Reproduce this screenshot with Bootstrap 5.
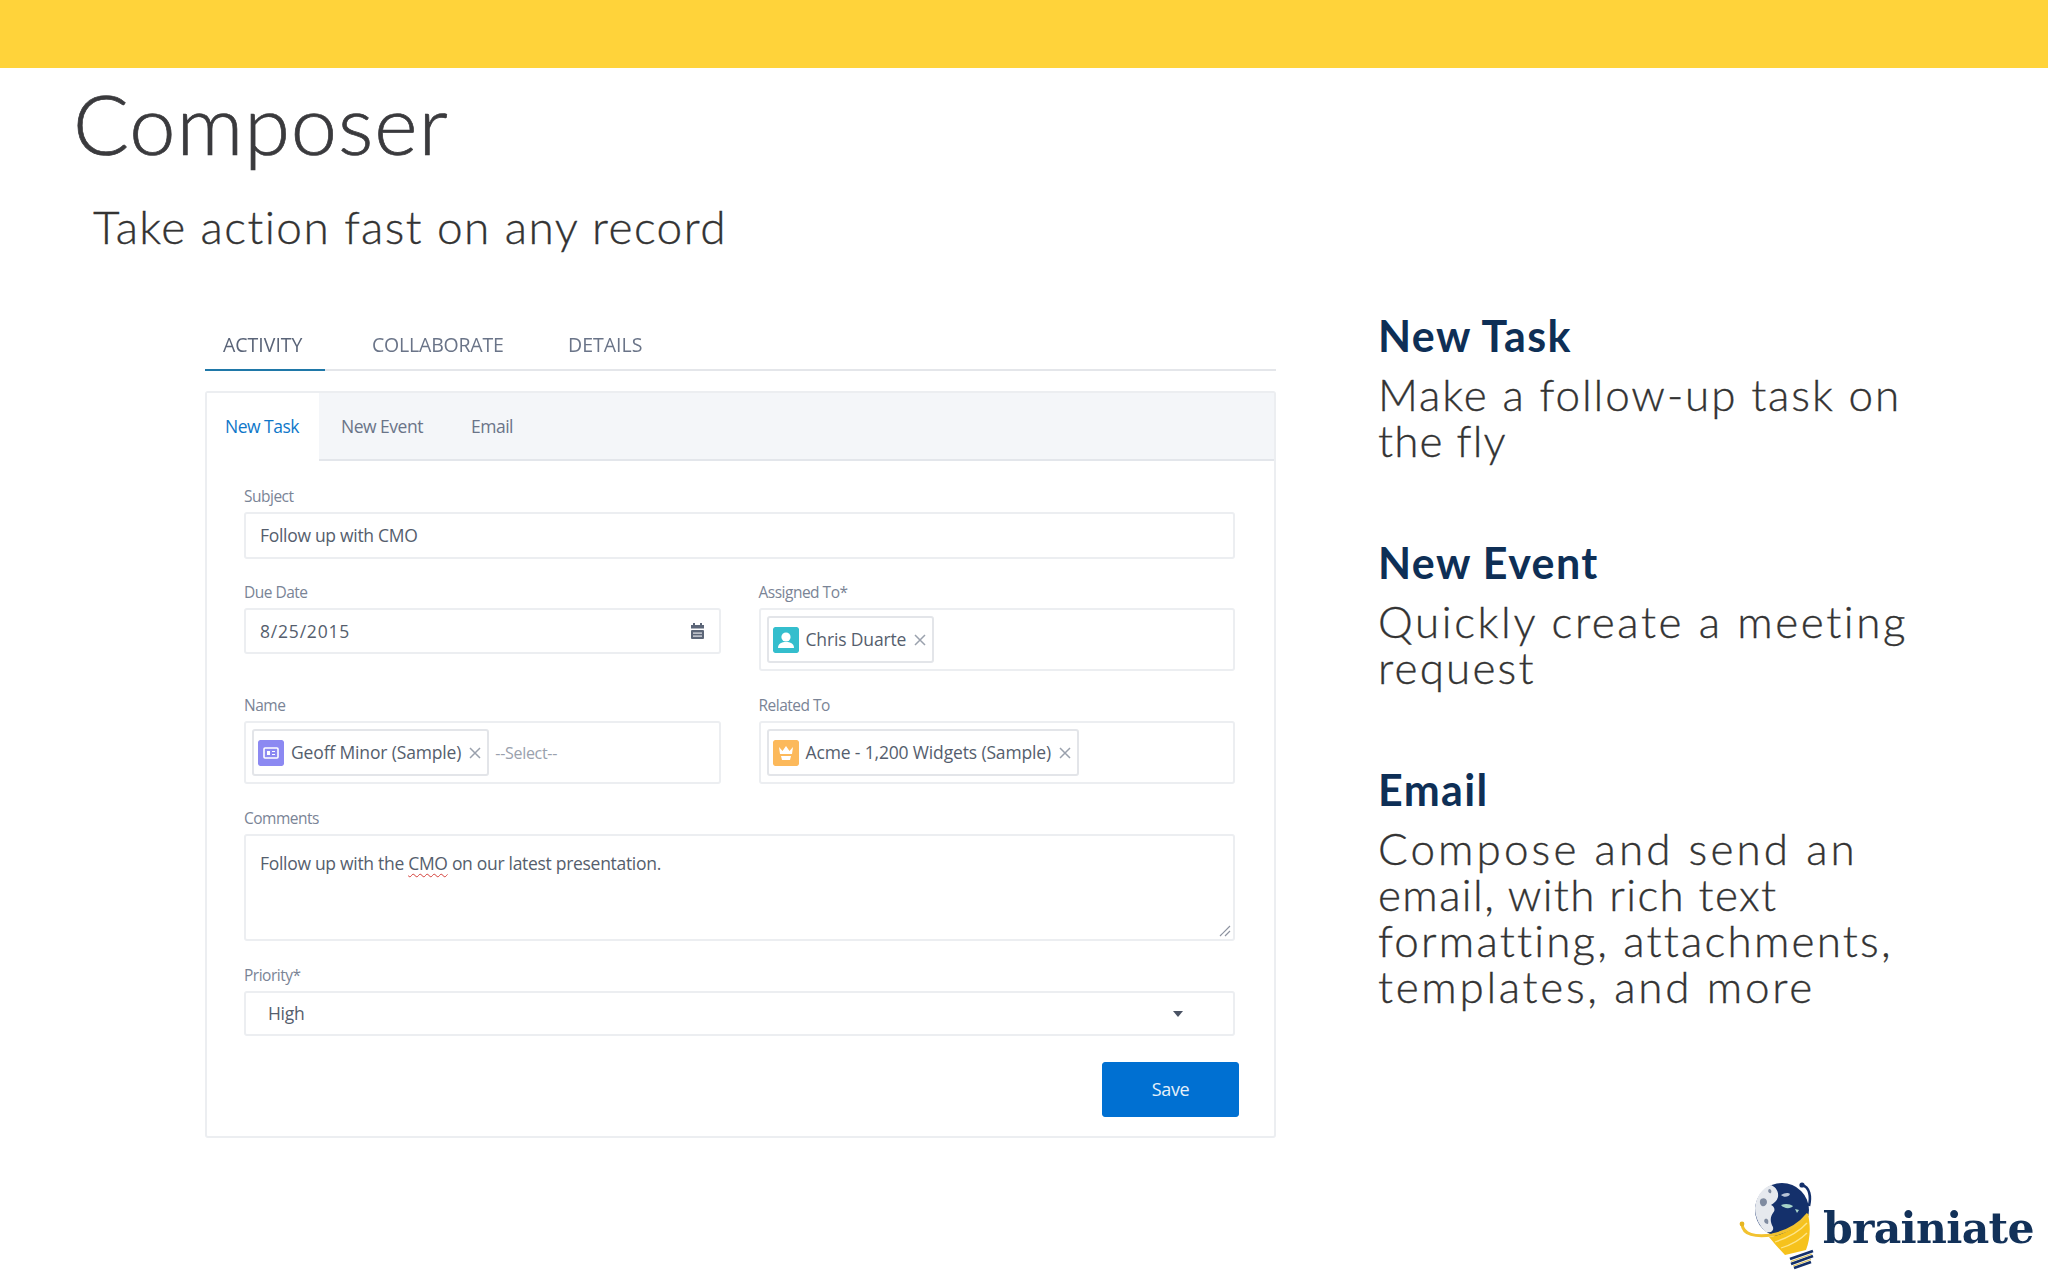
<!DOCTYPE html>
<html lang="en">
<head>
<meta charset="utf-8">
<title>Composer</title>
<link href="https://cdn.jsdelivr.net/npm/bootstrap@5.3.0/dist/css/bootstrap.min.css" rel="stylesheet">
<style>
html,body{width:2048px;height:1280px;overflow:hidden;background:#fff}
body{font-family:"Lato","Liberation Sans",sans-serif;color:#404040}
.topband{height:68px;background:#ffd33a}
.slide-title{margin:13px 0 0 73px;font-size:83px;line-height:84px;font-weight:300;color:#3a3a3d;letter-spacing:.9px;-webkit-text-stroke:.7px #3a3a3d}
.slide-sub{margin:34px 0 0 93px;font-size:46px;line-height:56px;font-weight:300;color:#333;letter-spacing:1.45px;-webkit-text-stroke:.35px #333}
.slide-main{margin-top:62px;padding-left:205px}
.shot{width:1071px;font-family:"Open Sans","Liberation Sans",sans-serif;filter:blur(.6px);color:#54698d}
.top-tabs{height:54px;border-bottom:2px solid #e4e6ea;gap:0}
.top-tabs .nav-link{padding:0;color:#6a7488;font-size:19.5px;line-height:56px;height:54px;margin:0;border:0;background:none;border-radius:0}
.top-tabs .tab1{width:120px;padding-left:18px;color:#5a6478;border-bottom:2px solid #1f78a8}
.top-tabs .tab2{margin-left:47px;width:129px;letter-spacing:-.2px}
.top-tabs .tab3{margin-left:67px}
.shot-card{margin-top:20px;height:747px;border:2px solid #eceef1;border-radius:3px;--bs-card-bg:#fff}
.sub-head{height:68px;padding:0;background:#f4f6f9;border-bottom:2px solid #e3e6eb;border-radius:0!important}
.sub-head .nav-tabs{border:0;height:66px}
.sub-head .nav-link{padding:0;border:0;border-radius:0;background:none;line-height:66px;font-size:17.5px;color:#6a7488;letter-spacing:-.5px}
.sub-head .nav-link.active{width:112px;height:68px;background:#fff;padding-left:18px;color:#0f77c9}
.sub-head .sl2{margin-left:22px;width:84px}
.sub-head .sl3{margin-left:46px}
.shot-form{padding:25px 39px 0 37px}
.fld-label{display:block;font-size:15.5px;line-height:20px;margin:0 0 6px;color:#7a8496;letter-spacing:-.5px}
.fld{border:2px solid #eceef1;border-radius:3px;background:#fff;font-size:17.5px;color:#555e6d;letter-spacing:-.3px;padding:0 14px;box-shadow:none;min-height:0}
.fld-subj{height:47px;line-height:43px;margin-bottom:23px}
.fld-date{height:46px;line-height:42px;letter-spacing:.8px;display:flex;justify-content:space-between;align-items:center}
.fld-pick{height:63px;padding:7px 6px;display:flex;align-items:center;gap:6px}
.pick-row{--bs-gutter-x:38px;--bs-gutter-y:0}
.row-a{height:103px;margin-bottom:10px}
.row-b{height:104px;margin-bottom:9px}
.pill{display:inline-flex;align-items:center;height:47px;padding:0 5px 0 4px;border:2px solid #e3e5e9;border-radius:3px;gap:7px;background:#fff;white-space:nowrap;letter-spacing:-.15px}
.pill-ico{width:26px;height:26px;border-radius:2px;flex:none;display:block}
.pill-x{width:14px;height:14px;flex:none;display:block}
.sel-ph{color:#9aa1ad;font-size:16px}
.fld-area{height:107px;position:relative;padding-top:14px;line-height:26px;margin-bottom:24px}
.wavy{text-decoration:underline wavy #d4403a 1px;text-underline-offset:3px}
.grip{position:absolute;right:2px;bottom:2px;width:12px;height:12px}
.fld-sel{height:45px;line-height:41px;padding-left:22px;display:flex;justify-content:space-between;align-items:center;padding-right:49px}
.save-row{margin:26px -4px 0 0}
.save-btn{--bs-btn-bg:#0070d2;--bs-btn-border-color:#0070d2;--bs-btn-color:#e6f0fa;width:137px;height:55px;border-radius:3px;font-size:18px;padding:0;letter-spacing:-.4px}
.side-col{margin-left:102px;width:640px;margin-top:-6px}
.side-item{height:227px}
.side-item h3{margin:0;font-size:43px;line-height:50px;font-weight:700;color:#0e2f56;letter-spacing:1.4px}
.side-item p{margin:10px 0 0;font-size:44px;line-height:46px;font-weight:300;color:#333;letter-spacing:2.2px;-webkit-text-stroke:.35px #333}
.side-item .tr-a{letter-spacing:1.9px}
.side-item .tr-b{letter-spacing:2.6px}
.side-item .tr-c{letter-spacing:3.1px}
.side-item .tr-d{letter-spacing:1.4px}
.side-item .tr-e{letter-spacing:2.7px}
.side-item .tr-f{letter-spacing:1.1px}
.brand{position:absolute;left:1735px;top:1175px;align-items:center}
.brand-name{font-family:"DejaVu Serif","Liberation Serif",serif;font-weight:700;font-size:42.5px;line-height:50px;color:#123159;letter-spacing:-.7px;margin:6px 0 0 -2px;filter:blur(.5px)}
.brand-mark{filter:blur(.5px)}
</style>
</head>
<body>
<div class="topband"></div>
<h1 class="slide-title">Composer</h1>
<p class="slide-sub mb-0">Take action fast on any record</p>
<div class="slide-main d-flex align-items-start">
  <div class="shot flex-shrink-0">
    <ul class="nav top-tabs">
      <li class="nav-item"><a class="nav-link tab1" href="#">ACTIVITY</a></li>
      <li class="nav-item"><a class="nav-link tab2" href="#">COLLABORATE</a></li>
      <li class="nav-item"><a class="nav-link tab3" href="#">DETAILS</a></li>
    </ul>
    <div class="card shot-card">
      <div class="card-header sub-head">
        <ul class="nav nav-tabs">
          <li class="nav-item"><a class="nav-link active" href="#">New Task</a></li>
          <li class="nav-item"><a class="nav-link sl2" href="#">New Event</a></li>
          <li class="nav-item"><a class="nav-link sl3" href="#">Email</a></li>
        </ul>
      </div>
      <div class="shot-form">
        <span class="fld-label">Subject</span>
        <div class="form-control fld fld-subj">Follow up with CMO</div>
        <div class="row pick-row row-a">
          <div class="col-6">
            <span class="fld-label">Due Date</span>
            <div class="form-control fld fld-date">8/25/2015
              <svg width="15" height="17" viewBox="0 0 15 17"><rect x="3" y="0" width="2" height="3" fill="#5c6678"/><rect x="10" y="0" width="2" height="3" fill="#5c6678"/><rect x="1" y="2" width="13" height="3.5" fill="#5c6678"/><rect x="1" y="7" width="13" height="9" rx="1" fill="#5c6678"/><rect x="3" y="9.5" width="9" height="1.2" fill="#e4e6ea"/><rect x="3" y="12.5" width="9" height="1.2" fill="#e4e6ea"/></svg>
            </div>
          </div>
          <div class="col-6">
            <span class="fld-label">Assigned To*</span>
            <div class="form-control fld fld-pick">
              <span class="pill">
                <svg class="pill-ico" viewBox="0 0 26 26"><rect width="26" height="26" rx="2" fill="#34becd"/><circle cx="13" cy="10" r="4.6" fill="#fff"/><path d="M5 21c0-4 3-6 8-6s8 2 8 6z" fill="#fff"/></svg>
                Chris Duarte
                <svg class="pill-x" viewBox="0 0 14 14"><path d="M2 2l10 10M12 2L2 12" stroke="#9aa1ad" stroke-width="1.5"/></svg>
              </span>
            </div>
          </div>
        </div>
        <div class="row pick-row row-b">
          <div class="col-6">
            <span class="fld-label">Name</span>
            <div class="form-control fld fld-pick">
              <span class="pill">
                <svg class="pill-ico" viewBox="0 0 26 26"><rect width="26" height="26" rx="2" fill="#8c89f2"/><rect x="6" y="8" width="14" height="10" rx="1" fill="none" stroke="#fff" stroke-width="1.6"/><rect x="9" y="11" width="3" height="4" fill="#fff"/><path d="M14 11.5h3M14 14.5h3" stroke="#fff" stroke-width="1.2"/></svg>
                Geoff Minor (Sample)
                <svg class="pill-x" viewBox="0 0 14 14"><path d="M2 2l10 10M12 2L2 12" stroke="#9aa1ad" stroke-width="1.5"/></svg>
              </span>
              <span class="sel-ph">--Select--</span>
            </div>
          </div>
          <div class="col-6">
            <span class="fld-label">Related To</span>
            <div class="form-control fld fld-pick">
              <span class="pill">
                <svg class="pill-ico" viewBox="0 0 26 26"><rect width="26" height="26" rx="2" fill="#fcb95b"/><path d="M6 7l3.5 4L13 6l3.5 5L20 7l-1 7H7z" fill="#fff"/><path d="M8 16h10l-1 4H9z" fill="#fff"/></svg>
                Acme - 1,200 Widgets (Sample)
                <svg class="pill-x" viewBox="0 0 14 14"><path d="M2 2l10 10M12 2L2 12" stroke="#9aa1ad" stroke-width="1.5"/></svg>
              </span>
            </div>
          </div>
        </div>
        <span class="fld-label">Comments</span>
        <div class="form-control fld fld-area">Follow up with the <span class="wavy">CMO</span> on our latest presentation.
          <svg class="grip" viewBox="0 0 12 12"><path d="M1 11L11 1M6 11l5-5" stroke="#8d93a0" stroke-width="1.2"/></svg>
        </div>
        <span class="fld-label">Priority*</span>
        <div class="form-control fld fld-sel">High
          <svg width="12" height="8" viewBox="0 0 12 8"><path d="M1 1h10L6 7z" fill="#4a5364"/></svg>
        </div>
        <div class="d-flex justify-content-end save-row">
          <button type="button" class="btn btn-primary save-btn">Save</button>
        </div>
      </div>
    </div>
  </div>
  <div class="side-col">
    <div class="side-item"><h3>New Task</h3><p><span class="tr-a">Make a follow-up task on</span><br><span class="tr-f">the fly</span></p></div>
    <div class="side-item"><h3>New Event</h3><p><span class="tr-b">Quickly create a meeting</span><br>request</p></div>
    <div class="side-item"><h3>Email</h3><p><span class="tr-c">Compose and send an</span><br><span class="tr-d">email, with rich text</span><br>formatting, attachments,<br><span class="tr-e">templates, and more</span></p></div>
  </div>
</div>
<div class="brand d-flex">
  <svg class="brand-mark" width="90" height="100" viewBox="0 0 90 100">
    <circle cx="47" cy="35" r="27" fill="#14306b"/>
    <path d="M36 10C27 13 21 22 20 33c0 10 5 19 11 24 5 1 8-1 7-5-3-5-3-10 0-14 3-3 1-7-2-8 3-2 6-4 7-8 1-5-2-10-7-12z" fill="#e6e9ee"/>
    <path d="M26 24c3-2 6 0 6 3s-3 5-5 4-3-5-1-7zM30 44c3-1 4 2 3 5-3 0-5-3-3-5zM34 14c2 0 3 2 2 4-2 1-4-2-2-4z" fill="#7f8ba0"/>
    <path d="M46 20c3-2 7-3 9-1-1 3-6 4-9 1z" fill="#b7c3d6"/>
    <path d="M46 30c5-2 9-1 12 1-2 3-9 3-12-1zM60 34l4 1-2 3z" fill="#a6d3c8"/>
    <path d="M34 62C50 60 64 51 73 39 76 52 75 65 71 75L50 80C44 74 39 68 34 62z" fill="#f6c21c"/>
    <path d="M7 49C8 60 20 62 37 60 52 57 65 49 73 39" fill="none" stroke="#f2c230" stroke-width="3"/>
    <path d="M40 67C52 63 64 57 72 48M46 73C56 70 66 64 72 58" fill="none" stroke="#fde58a" stroke-width="1.3"/>
    <circle cx="7" cy="49" r="2.4" fill="#e6b520"/>
    <path d="M67 10C75 12 76 22 74 31" fill="none" stroke="#14306b" stroke-width="2.6"/>
    <circle cx="67" cy="10" r="2.6" fill="#14306b"/>
    <path d="M55 84L78 76M56 89L78 81M59 93L76 87" stroke="#14306b" stroke-width="2.8"/>
    <path d="M56 86.5L77 79M58 91L76 84.5" stroke="#d9c05a" stroke-width="1.2"/>
  </svg>
  <span class="brand-name">brainiate</span>
</div>
</body>
</html>
